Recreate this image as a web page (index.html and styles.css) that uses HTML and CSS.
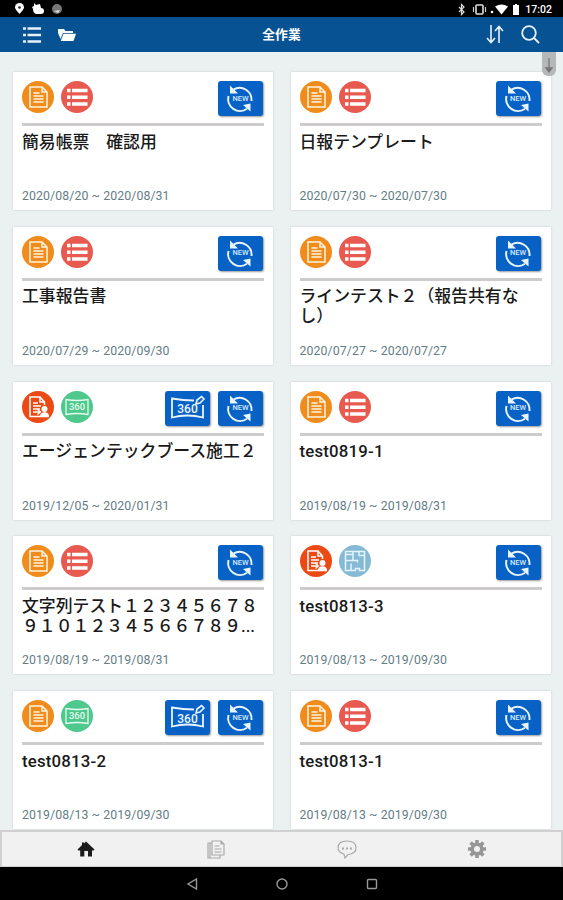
FILE: index.html
```html
<!DOCTYPE html>
<html lang="ja">
<head>
  <meta charset="UTF-8" />
  <meta name="viewport" content="width=device-width, initial-scale=1.0"/>
  <title>全作業</title>
  <link rel="stylesheet" href="styles.css">
</head>
<body>

  <!-- Icons -->
  <svg class="sprite" aria-hidden="true">
    <symbol id="i-report" viewBox="0 0 32 32">
      <circle cx="16" cy="16" r="16" fill="#f08c1c"/>
      <path d="M8 6h12l5 5v15H8z M20 6v5h5" fill="none" stroke="#fff3df" stroke-width="1.5"/>
      <path d="M11.5 12h6M11.5 15h10M11.5 18h10M11.5 21h10" stroke="#fff3df" stroke-width="1.3"/>
    </symbol>
    <symbol id="i-list" viewBox="0 0 32 32">
      <circle cx="16" cy="16" r="16" fill="#e85a50"/>
      <path d="M6 9.500h3.500M11 9.500h15.500M6 16.200h3.500M11 16.200h15.500M6 23h3.500M11 23h15.500" stroke="#fff" stroke-width="3.6"/>
    </symbol>
    <symbol id="i-person" viewBox="0 0 32 32">
      <circle cx="16" cy="16" r="16" fill="#ec4a14"/>
      <path d="M18 25.500H8V6h10l4.500 5v3M18 6v5h4.500" fill="none" stroke="#fff" stroke-width="1.500"/>
      <path d="M11 12h5M11 15h8M11 18h7M11 21h7M15.500 18.500l3 2.500-3 2.500" fill="none" stroke="#fff" stroke-width="1.3"/>
      <circle cx="22.500" cy="18" r="3" fill="#fff"/>
      <path d="M18 26.300v-2q1-3 4.500-3t4.500 3v2z" fill="#fff"/>
    </symbol>
    <symbol id="i-pano" viewBox="0 0 32 32">
      <circle cx="16" cy="16" r="16" fill="#4ec88c"/>
      <path d="M5 8.500q11 2 22 0v15q-11-2-22 0z" fill="none" stroke="#e4fbef" stroke-width="1.3"/>
    </symbol>
    <symbol id="i-plan" viewBox="0 0 32 32">
      <circle cx="16" cy="16" r="16" fill="#86bad4"/>
      <path d="M6.500 6.500h19v19h-5v-2h-4v2h-10zM14 6.500v9M6.500 15.500h12v2M6.500 9.500h7.500M20 6.500v4h5.500M12 18.500v7" fill="none" stroke="#e2f4fc" stroke-width="1.500"/>
    </symbol>
    <symbol id="i-new" viewBox="0 0 45 35">
      <g fill="none" stroke="#e8f5ff" stroke-width="2">
        <path d="M15.500 8.500A12 12 0 0 1 33.500 20"/>
        <path d="M10.500 15A12 12 0 0 0 29 27.800"/>
      </g>
      <path d="M12 4.500v8h8zM32.500 30.500v-8l-7.500 1.500z" fill="#e8f5ff"/>
    </symbol>
    <symbol id="i-edit360" viewBox="0 0 45 35">
      <path d="M29 9.500q-11 0-22-2v19q15.500-4 31 0V14" fill="none" stroke="#e8f5ff" stroke-width="1.800"/>
      <path d="M31 13l1-4 4.500-3.500 2.500 2.500-4 4z" fill="#0d62c4" stroke="#e8f5ff" stroke-width="1.600"/>
    </symbol>
  </svg>

  <div class="status-bar">
    <div class="status-left">
      <svg width="50" height="16" viewBox="0 0 50 16">
        <path d="M5.500 14Q1 9 1 7.500a4.500 4.500 0 0 1 9 0Q10 9 5.500 14z" fill="#fff"/>
        <circle cx="5.500" cy="7.500" r="1.300" fill="#222"/>
        <path d="M20 3l2 2 4-1 1 4q3 0 3 3t-3 3h-5q-3-1-3-5l-1-2 2-1z" fill="#fff"/>
        <circle cx="43" cy="9" r="5" fill="#777"/>
        <path d="M40 11l6-1-2 3z" fill="#ddd"/>
      </svg>
    </div>
    <div class="status-right">
      <svg width="66" height="16" viewBox="0 0 66 16">
        <path d="M4 6l5 5-2.500 2.500v-10L9 6l-5 5" fill="none" stroke="#ddd" stroke-width="1.200"/>
        <rect x="21" y="4" width="7" height="9" rx="1" fill="none" stroke="#ddd" stroke-width="1.600"/>
        <path d="M18.500 6v5M30.500 6v5" stroke="#ccc" stroke-width="1.200"/>
        <circle cx="37" cy="11" r="1.300" fill="#fff"/>
        <path d="M40 5.500q6.500-4 13 0L46.500 13.500z" fill="#fff"/>
        <path d="M58 4h2V3h2v1h2v10h-6z" fill="#fff"/>
      </svg>
      <span class="clock">17:02</span>
    </div>
  </div>

  <header class="header">
    <div class="header-side">
      <svg width="18" height="18" viewBox="0 0 18 18">
        <path d="M0 2.500h3M4.500 2.500H18M0 9h3M4.500 9H18M0 15.500h3M4.500 15.500H18" stroke="#e6f1fa" stroke-width="2.400"/>
      </svg>
      <svg width="18" height="14" viewBox="0 0 18 14">
        <path d="M0 1h6l1.500 2H15v2H5l-2.500 6L0 5z" fill="#f2f8fd"/>
        <path d="M5.500 5.800H18L15.500 13H2.700z" fill="#fff"/>
      </svg>
    </div>
    <h1 class="header-title">全作業</h1>
    <div class="header-side header-right">
      <svg width="18" height="19" viewBox="0 0 18 19" fill="none" stroke="#e6f1fa" stroke-width="1.600">
        <path d="M5 0v17M1 13l4 4.500 4-4.500M13 18V1.500M9 6l4-4.500L17 6"/>
      </svg>
      <svg width="19" height="19" viewBox="0 0 19 19" fill="none" stroke="#e6f1fa" stroke-width="1.800">
        <circle cx="8" cy="8" r="6.800"/>
        <path d="M13 13l5 5"/>
      </svg>
    </div>
  </header>

  <main class="content">
    <div class="scroll-thumb">
      <svg width="14" height="24" viewBox="0 0 14 24">
        <path d="M7 6v14M4 16l3 4 3-4z" fill="#777" stroke="#777" stroke-width="1.300"/>
      </svg>
    </div>

    <div class="cards">
      <section class="card">
        <div class="card-top">
          <div class="badge"><svg><use href="#i-report"/></svg></div>
          <div class="badge"><svg><use href="#i-list"/></svg></div>
          <div class="actions"><button class="btn"><svg><use href="#i-new"/></svg><span>NEW</span></button></div>
        </div>
        <h2>簡易帳票　確認用</h2>
        <p class="date">2020/08/20 ~ 2020/08/31</p>
      </section>

      <section class="card">
        <div class="card-top">
          <div class="badge"><svg><use href="#i-report"/></svg></div>
          <div class="badge"><svg><use href="#i-list"/></svg></div>
          <div class="actions"><button class="btn"><svg><use href="#i-new"/></svg><span>NEW</span></button></div>
        </div>
        <h2>日報テンプレート</h2>
        <p class="date">2020/07/30 ~ 2020/07/30</p>
      </section>

      <section class="card">
        <div class="card-top">
          <div class="badge"><svg><use href="#i-report"/></svg></div>
          <div class="badge"><svg><use href="#i-list"/></svg></div>
          <div class="actions"><button class="btn"><svg><use href="#i-new"/></svg><span>NEW</span></button></div>
        </div>
        <h2>工事報告書</h2>
        <p class="date">2020/07/29 ~ 2020/09/30</p>
      </section>

      <section class="card">
        <div class="card-top">
          <div class="badge"><svg><use href="#i-report"/></svg></div>
          <div class="badge"><svg><use href="#i-list"/></svg></div>
          <div class="actions"><button class="btn"><svg><use href="#i-new"/></svg><span>NEW</span></button></div>
        </div>
        <h2>ラインテスト２（報告共有な<br>し）</h2>
        <p class="date">2020/07/27 ~ 2020/07/27</p>
      </section>

      <section class="card">
        <div class="card-top">
          <div class="badge"><svg><use href="#i-person"/></svg></div>
          <div class="badge"><svg><use href="#i-pano"/></svg><span>360</span></div>
          <div class="actions">
            <button class="btn btn-360"><svg><use href="#i-edit360"/></svg><span>360</span></button>
            <button class="btn"><svg><use href="#i-new"/></svg><span>NEW</span></button>
          </div>
        </div>
        <h2>エージェンテックブース施工２</h2>
        <p class="date">2019/12/05 ~ 2020/01/31</p>
      </section>

      <section class="card">
        <div class="card-top">
          <div class="badge"><svg><use href="#i-report"/></svg></div>
          <div class="badge"><svg><use href="#i-list"/></svg></div>
          <div class="actions"><button class="btn"><svg><use href="#i-new"/></svg><span>NEW</span></button></div>
        </div>
        <h2 class="latin">test0819-1</h2>
        <p class="date">2019/08/19 ~ 2019/08/31</p>
      </section>

      <section class="card">
        <div class="card-top">
          <div class="badge"><svg><use href="#i-report"/></svg></div>
          <div class="badge"><svg><use href="#i-list"/></svg></div>
          <div class="actions"><button class="btn"><svg><use href="#i-new"/></svg><span>NEW</span></button></div>
        </div>
        <h2>文字列テスト１２３４５６７８<br>９１０１２３４５６６７８９...</h2>
        <p class="date">2019/08/19 ~ 2019/08/31</p>
      </section>

      <section class="card">
        <div class="card-top">
          <div class="badge"><svg><use href="#i-person"/></svg></div>
          <div class="badge"><svg><use href="#i-plan"/></svg></div>
          <div class="actions"><button class="btn"><svg><use href="#i-new"/></svg><span>NEW</span></button></div>
        </div>
        <h2 class="latin">test0813-3</h2>
        <p class="date">2019/08/13 ~ 2019/09/30</p>
      </section>

      <section class="card">
        <div class="card-top">
          <div class="badge"><svg><use href="#i-report"/></svg></div>
          <div class="badge"><svg><use href="#i-pano"/></svg><span>360</span></div>
          <div class="actions">
            <button class="btn btn-360"><svg><use href="#i-edit360"/></svg><span>360</span></button>
            <button class="btn"><svg><use href="#i-new"/></svg><span>NEW</span></button>
          </div>
        </div>
        <h2 class="latin">test0813-2</h2>
        <p class="date">2019/08/13 ~ 2019/09/30</p>
      </section>

      <section class="card">
        <div class="card-top">
          <div class="badge"><svg><use href="#i-report"/></svg></div>
          <div class="badge"><svg><use href="#i-list"/></svg></div>
          <div class="actions"><button class="btn"><svg><use href="#i-new"/></svg><span>NEW</span></button></div>
        </div>
        <h2 class="latin">test0813-1</h2>
        <p class="date">2019/08/13 ~ 2019/09/30</p>
      </section>
    </div>
  </main>

  <nav class="tabs">
    <a class="tab">
      <svg width="18" height="18" viewBox="0 0 18 18">
        <path d="M9 1.500L17.500 9.500l-1 1H15V16.500h-4V11H7.300v5.500H3.200v-6H1.500l-1-1L5 5V2.500h2V3.500z" fill="#1c1c1c"/>
      </svg>
    </a>
    <a class="tab">
      <svg width="18" height="19" viewBox="0 0 18 19" fill="none" stroke="#aaa" stroke-width="1.200">
        <path d="M5 1h9l3 3v11H5zM5 3H1v15h12v-3M14 1v3h3M3 3v15M7.500 6h5M7.500 9h7M7.500 12h7"/>
      </svg>
    </a>
    <a class="tab">
      <svg width="20" height="19" viewBox="0 0 20 19">
        <path d="M7 14.200Q1 12.500 1 7.800 1 1 10 1t9 6.800q0 6-8 6.700l-3 3.500z" fill="none" stroke="#aaa" stroke-width="1.200"/>
        <path d="M5 8.500h2M9 8.500h2M13 8.500h2" stroke="#aaa" stroke-width="2"/>
      </svg>
    </a>
    <a class="tab">
      <svg width="18" height="18" viewBox="0 0 18 18">
        <g stroke="#969696" stroke-width="3.600">
          <path d="M9 0v3.500M9 14.500V18M0 9h3.500M14.500 9H18M2.600 2.600l2.500 2.500M12.900 12.900l2.500 2.500M15.400 2.600l-2.500 2.500M5.100 12.900l-2.500 2.500"/>
          <circle cx="9" cy="9" r="4.800" fill="none"/>
        </g>
      </svg>
    </a>
  </nav>

  <div class="nav-bar">
    <svg width="12" height="12" viewBox="0 0 12 12"><path d="M10.500 1v10L2 6z"/></svg>
    <svg width="12" height="12" viewBox="0 0 12 12"><circle cx="6" cy="6" r="5"/></svg>
    <svg width="12" height="12" viewBox="0 0 12 12"><rect x="1.500" y="1.500" width="9" height="9" rx="1"/></svg>
  </div>

</body>
</html>
```
FILE: styles.css
```css
* {
  box-sizing: border-box;
}

body {
  margin: 0;
  height: 900px;
  display: flex;
  flex-direction: column;
  overflow: hidden;
  background-color: #000;
  font-family: Roboto, "Noto Sans CJK JP", sans-serif;
}

svg {
  display: block;
}

.sprite {
  position: absolute;
  width: 0;
  height: 0;
}

/* Status bar */
.status-bar {
  flex: none;
  height: 17px;
  display: flex;
  justify-content: space-between;
  padding: 0 11px 0 14px;
}

.status-right {
  display: flex;
  align-items: center;
  gap: 4px;
}

.clock {
  color: #fff;
  font-size: 10.5px;
  line-height: 16px;
  padding-top: 2px;
  font-weight: 500;
}

/* Header */
.header {
  flex: none;
  height: 35px;
  display: flex;
  align-items: center;
  justify-content: space-between;
  padding: 0 23px;
  background-color: #075293;
}

.header-side {
  width: 120px;
  display: flex;
  align-items: center;
  gap: 17px;
}

.header-right {
  justify-content: flex-end;
}

.header-title {
  margin: 0;
  color: #fff;
  font-size: 12.8px;
  line-height: 20px;
  font-weight: bold;
}

/* Cards */
.content {
  position: relative;
  flex: none;
  height: 778px;
  overflow: hidden;
  padding: 20px 12px 0 13px;
  background-color: #ebf1f1;
}

.scroll-thumb {
  position: absolute;
  top: 0;
  right: 7px;
  width: 14px;
  height: 24px;
  border-radius: 0 0 6px 6px;
  background-color: #b5b8b8;
  z-index: 1;
}

.cards {
  display: grid;
  grid-template-columns: 260px 260px;
  gap: 16.75px 17.5px;
}

.card {
  height: 138px;
  padding: 9px;
  display: flex;
  flex-direction: column;
  background-color: #fff;
  box-shadow: 0 0 2px rgba(0, 0, 0, 0.18);
}

.card-top {
  height: 45px;
  display: flex;
  gap: 7px;
  border-bottom: 3px solid #cdcbcc;
}

/* label sits in the same grid cell as its icon */
.badge,
.btn {
  display: grid;
  place-items: center;
}

.badge > *,
.btn > * {
  grid-area: 1 / 1;
}

.badge,
.badge svg {
  width: 32px;
  height: 32px;
}

.badge span {
  color: #e4fbef;
  font-size: 9.5px;
  line-height: 12px;
  font-weight: 500;
}

.actions {
  display: flex;
  gap: 8px;
  margin-left: auto;
  padding-right: 1px;
}

.btn {
  width: 45px;
  height: 35px;
  padding: 0;
  border: none;
  border-radius: 3px;
  background-color: #0862c6;
  box-shadow: 1px 1px 2px rgba(0, 0, 0, 0.4);
  font-family: inherit;
}

.btn svg {
  width: 45px;
  height: 35px;
}

.btn span {
  color: #d2eaff;
  font-size: 7.5px;
  line-height: 10px;
  font-weight: 500;
}

.btn-360 span {
  padding-top: 2px;
  color: #e8f5ff;
  font-size: 12px;
  line-height: 14px;
}

.card h2 {
  margin: 5.5px 0 0;
  color: #1a1a1a;
  font-size: 16.85px;
  line-height: 20px;
  font-weight: 500;
  white-space: nowrap;
}

.card h2.latin {
  font-size: 16.8px;
  letter-spacing: 0.2px;
}

.date {
  margin: auto 0 -3px;
  color: #647d85;
  font-size: 12.3px;
  line-height: 16px;
  letter-spacing: 0.1px;
}

/* Bottom tabs */
.tabs {
  flex: none;
  height: 37px;
  display: flex;
  padding: 0 19px;
  background-color: #f1f1f1;
  border: 2px solid #d0d0d0;
  border-bottom-width: 1px;
}

.tab {
  flex: 1;
  display: flex;
  align-items: center;
  justify-content: center;
}

.nav-bar {
  flex: 1;
  display: flex;
  align-items: center;
  justify-content: center;
  gap: 78px;
}

.nav-bar svg {
  fill: none;
  stroke: #999;
  stroke-width: 1.4;
}
```
